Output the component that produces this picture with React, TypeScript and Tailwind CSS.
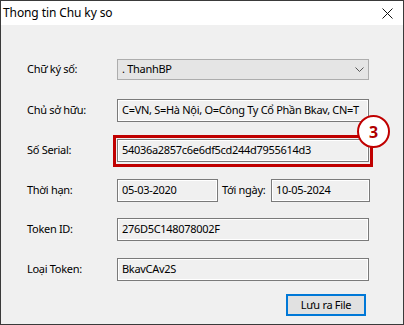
import React from 'react';

const font = { fontFamily: '"Noto Sans", "Open Sans", sans-serif' };

function Field({ value, className = '' }: { value: string; className?: string }) {
  return (
    <div
      className={`h-[23px] border border-[#7a7a7a] bg-[#f0f0f0] shadow-[inset_0_0_0_1px_#ffffff] pl-[4px] flex items-center text-[11px] tracking-[-0.3px] text-black whitespace-nowrap overflow-hidden ${className}`}
    >
      {value}
    </div>
  );
}

function Row({ label, children, className = '' }: { label: string; children: React.ReactNode; className?: string }) {
  return (
    <div className={`flex items-center ${className}`}>
      <div className="w-[90px] shrink-0 text-[11px] tracking-[-0.3px] text-black">{label}</div>
      {children}
    </div>
  );
}

export default function App() {
  return (
    <div style={font} className="w-[404px] h-[325px] border border-[#3a3a3a] bg-[#f0f0f0] flex flex-col overflow-hidden">
      {/* title bar */}
      <div className="h-[24px] bg-white flex items-center justify-between shrink-0">
        <span className="pl-[2px] text-[12px] tracking-[-0.1px] text-black">Thong tin Chu ky so</span>
        <svg width="11" height="11" viewBox="0 0 11 11" className="mr-[10px]">
          <path d="M0.5 0.5 L10.5 10.5 M10.5 0.5 L0.5 10.5" stroke="#111" strokeWidth="1" />
        </svg>
      </div>

      {/* body */}
      <div className="pl-[26px] flex flex-col">
        <Row label="Chữ ký số:" className="mt-[34px] h-[21px]">
          <div className="w-[252px] h-[21px] border border-[#adadad] bg-[#e5e5e5] flex items-center justify-between pl-[4px] pr-[4px] text-[11px] tracking-[-0.3px] text-black">
            <span>. ThanhBP</span>
            <svg width="9" height="5" viewBox="0 0 9 5">
              <path d="M0.5 0.5 L4.5 4.5 L8.5 0.5" stroke="#555" strokeWidth="1" fill="none" />
            </svg>
          </div>
        </Row>

        <Row label="Chủ sở hữu:" className="mt-[19px]">
          <Field className="w-[252px]" value="C=VN, S=Hà Nội, O=Công Ty Cổ Phần Bkav, CN=T" />
        </Row>

        <Row label="Số Serial:" className="mt-[17px]">
          <div className="relative">
            <Field className="w-[252px]" value="54036a2857c6e6df5cd244d7955614d3" />
            {/* annotation frame */}
            <div className="absolute -left-[4px] -top-[4px] w-[260px] h-[32px] border-[3px] border-[#c00000]" />
            <div className="absolute left-[240px] -top-[24px] w-[33px] h-[33px] rounded-full border-2 border-[#c00000] bg-white flex items-center justify-center text-[16px] font-bold text-[#b00000]">
              3
            </div>
          </div>
        </Row>

        <Row label="Thời hạn:" className="mt-[17px]">
          <Field className="w-[101px]" value="05-03-2020" />
          <span className="ml-[4px] w-[49px] text-[11px] tracking-[-0.3px] text-black whitespace-nowrap">Tới ngày:</span>
          <Field className="w-[99px]" value="10-05-2024" />
        </Row>

        <Row label="Token ID:" className="mt-[16px]">
          <Field className="w-[252px]" value="276D5C148078002F" />
        </Row>

        <Row label="Loại Token:" className="mt-[17px]">
          <Field className="w-[252px]" value="BkavCAv2S" />
        </Row>

        <div className="flex justify-end mt-[13px] pr-[37px]">
          <button className="w-[80px] h-[22px] border-2 border-[#0078d7] bg-[#e1e1e1] text-[11px] tracking-[-0.3px] text-black flex items-center justify-center">
            Lưu ra File
          </button>
        </div>
      </div>
    </div>
  );
}
